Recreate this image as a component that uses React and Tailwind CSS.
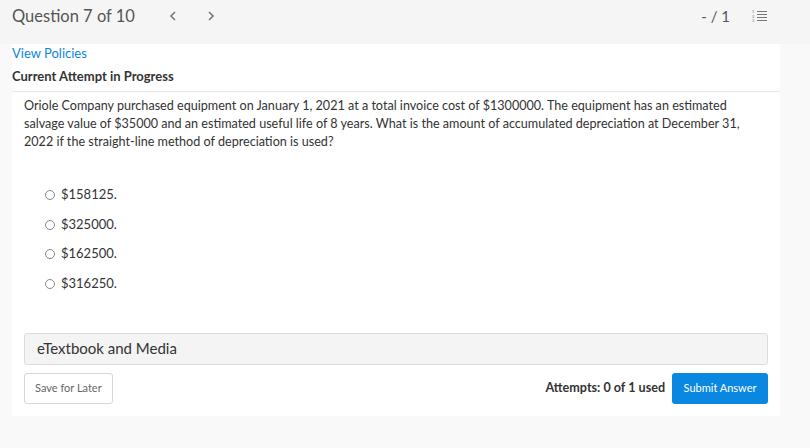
import React from 'react';

const options = [ '$158125.', '$325000.', '$162500.', '$316250.' ];

const ListIcon = () => (
	<svg width="16" height="14" viewBox="0 0 16 14" fill="none">
		<text x="0" y="4" fontSize="4" fill="#777" fontFamily="Lato">1</text>
		<text x="0" y="8.5" fontSize="4" fill="#777" fontFamily="Lato">2</text>
		<text x="0" y="13" fontSize="4" fill="#777" fontFamily="Lato">3</text>
		<path d="M5 2.5h10M5 5.5h10M5 8.5h10M5 11.5h10" stroke="#777" strokeWidth="1" />
	</svg>
);

const Chevron = ( { dir } ) => (
	<svg width="8" height="10" viewBox="0 0 8 10" fill="none">
		<path d={ dir === 'left' ? 'M6 1L2 5l4 4' : 'M2 1l4 4-4 4' } stroke="#777" strokeWidth="1.6" />
	</svg>
);

export default function App() {
	return (
		<div className="w-[810px] h-[448px] bg-[#f9f9f9] text-[#333] overflow-hidden" style={ { fontFamily: 'Lato, "Open Sans", sans-serif' } }>
			<div className="h-[44px] bg-[#f5f5f5] flex items-start pt-[6px] pl-[12px] pr-[42px]">
				<div className="h-[20px] flex items-center w-full">
					<span className="text-[16.5px] leading-[20px] text-[#555] w-[157px]">Question 7 of 10</span>
					<Chevron dir="left" />
					<span className="w-[30px]" />
					<Chevron dir="right" />
					<span className="flex-1" />
					<span className="text-[15px] leading-[20px] text-[#555] mr-[22px]">- / 1</span>
					<ListIcon />
				</div>
			</div>
			<div className="ml-[12px] w-[768px] bg-white">
				<div className="pb-[6px]">
					<div className="text-[13px] leading-[18px] text-[#0a87e0]">View Policies</div>
					<div className="text-[13px] leading-[18px] font-bold text-[#333] mt-[5px]">Current Attempt in Progress</div>
				</div>
				<div className="border-t border-[#e6e6e6]" />
				<div className="px-[12px] pt-[5px] pb-[12px]">
					<p className="text-[12.6px] leading-[18px] text-[#333]">
						Oriole Company purchased equipment on January 1, 2021 at a total invoice cost of $1300000. The equipment has an estimated salvage value of $35000 and an estimated useful life of 8 years. What is the amount of accumulated depreciation at December 31, 2022 if the straight-line method of depreciation is used?
					</p>
					<div className="mt-[35px] pl-[21px] flex flex-col gap-[11.5px]">
						{ options.map( ( opt, i ) => (
							<label key={ `opt-${ i }` } className="flex items-center h-[18px] text-[13px] text-[#333]">
								<span className="w-[10px] h-[10px] rounded-full border border-[#888] bg-white mr-[6px]" />
								{ opt }
							</label>
						) ) }
					</div>
					<div className="mt-[40px] h-[32px] flex items-center px-[12px] bg-[#f4f4f4] border border-[#dcdcdc] rounded-[3px] text-[15px] text-[#333]">
						eTextbook and Media
					</div>
					<div className="mt-[8px] flex items-center">
						<button className="h-[31px] px-[10px] border border-[#d6d6d6] rounded-[3px] bg-white text-[11px] text-[#666]">Save for Later</button>
						<span className="flex-1" />
						<span className="text-[12.6px] font-bold text-[#333] mr-[7px]">Attempts: 0 of 1 used</span>
						<button className="h-[31px] px-[11.5px] rounded-[3px] bg-[#0a87e0] text-[11px] text-white">Submit Answer</button>
					</div>
				</div>
			</div>
		</div>
	);
}
